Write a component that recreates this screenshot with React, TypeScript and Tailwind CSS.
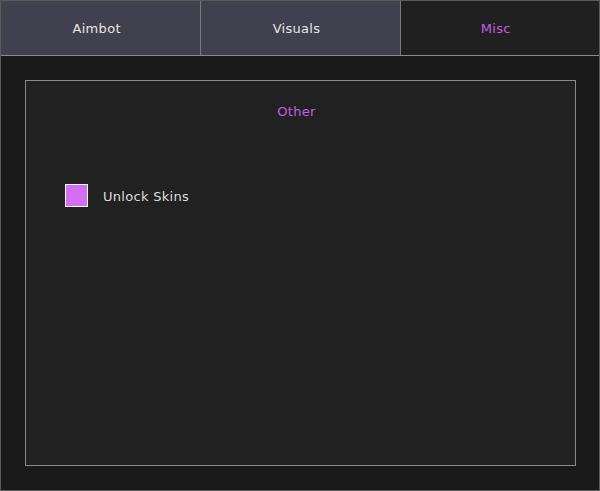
import { useState } from "react";

const tabs = ["Aimbot", "Visuals", "Misc"];

export default function App() {
  const [active, setActive] = useState("Misc");
  const [unlock, setUnlock] = useState(true);

  return (
    <div
      className="flex h-[491px] w-[600px] flex-col border border-[#5a5a5a] bg-[#191919]"
      style={{ fontFamily: '"DejaVu Sans", sans-serif' }}
    >
      <div className="flex h-[55px] shrink-0 border-b border-[#8a8a8a]">
        {tabs.map((tab, i) => (
          <button
            key={tab}
            type="button"
            onClick={() => setActive(tab)}
            className={`flex h-full w-[200px] items-center justify-center pr-2 pt-[2px] text-[13px] tracking-[0.3px] ${
              i > 0 ? "border-l border-[#7a7a7a]" : ""
            } ${
              active === tab
                ? "bg-[#202020] text-[#c25fe6]"
                : "bg-[#40404e] text-[#e6e6e6]"
            }`}
          >
            {tab}
          </button>
        ))}
      </div>

      <div className="mb-6 ml-6 mr-[23px] mt-6 flex flex-1 flex-col border border-[#8a8a8a] bg-[#212121]">
        <p className="pr-2 pt-[21px] text-center text-[13px] tracking-[0.3px] text-[#c25fe6]">Other</p>

        <label className="ml-[39px] mt-[62px] flex cursor-pointer items-center gap-[15px]">
          <span
            onClick={() => setUnlock(!unlock)}
            className={`h-[23px] w-[23px] border border-white ${
              unlock ? "bg-[#d36ef5]" : "bg-transparent"
            }`}
          />
          <span className="pt-[3px] text-[13px] tracking-[0.3px] text-[#dedede]">Unlock Skins</span>
        </label>
      </div>
    </div>
  );
}
